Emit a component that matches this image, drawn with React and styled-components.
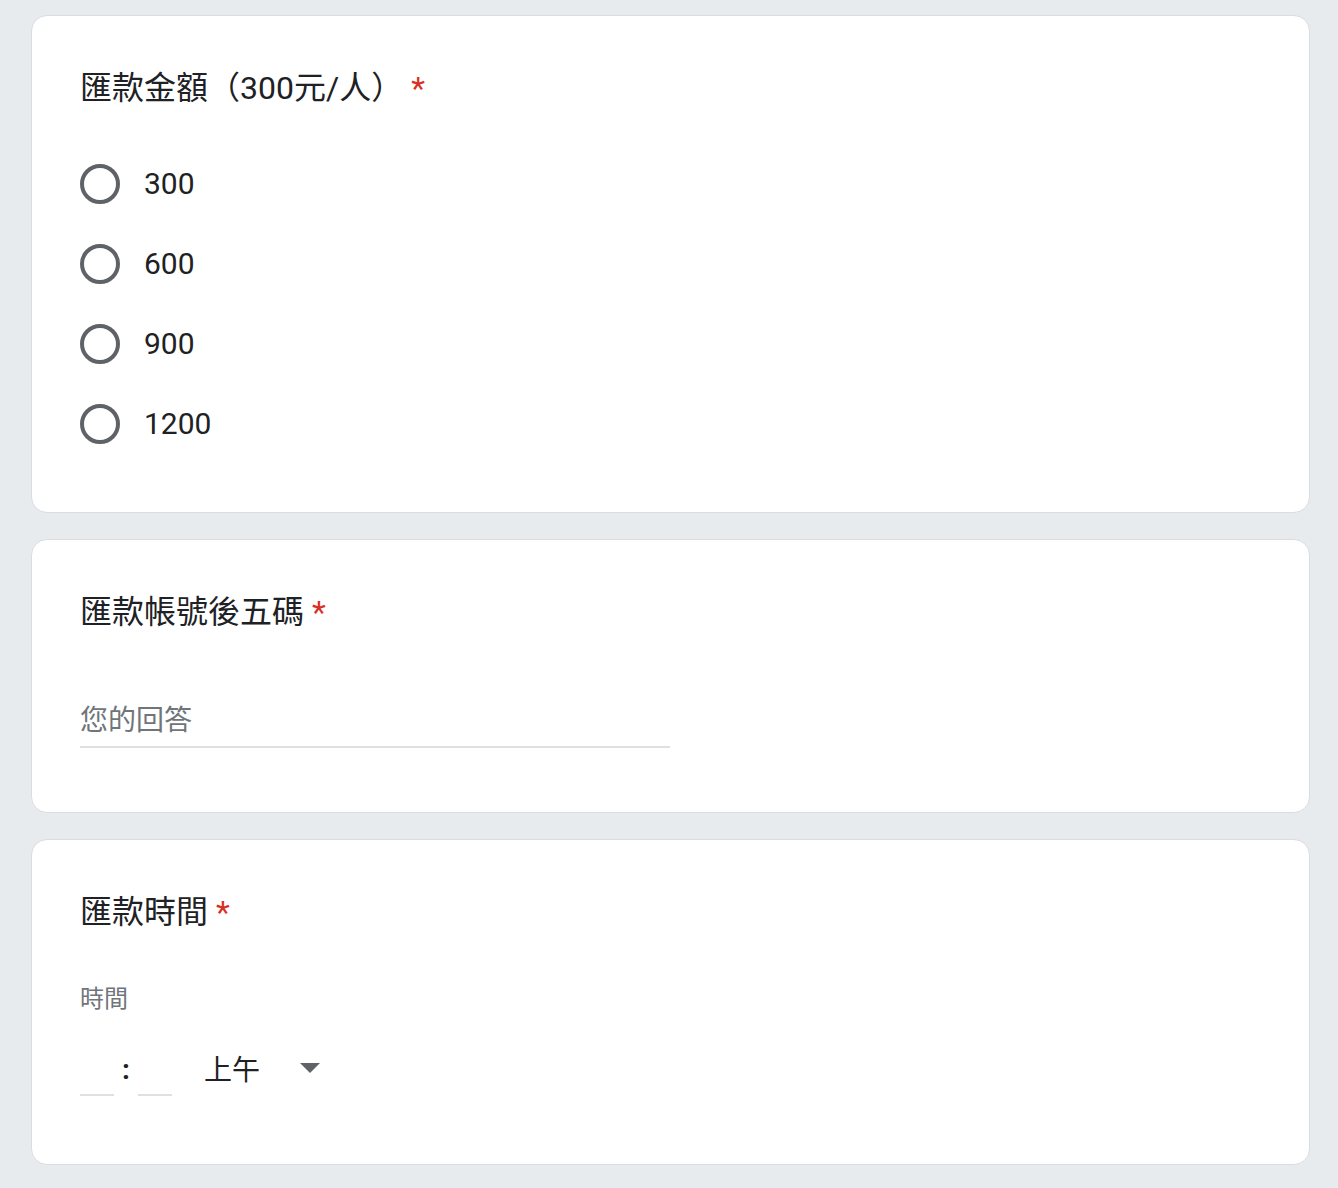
import styled, { createGlobalStyle } from "styled-components";

const GlobalStyle = createGlobalStyle`
  html, body {
    margin: 0;
    padding: 0;
    background-color: #e8ebee;
  }

  body {
    font-family: Roboto, "Noto Sans CJK TC", sans-serif;
    color: #202124;
  }
`;

const Page = styled.div`
  display: flex;
  flex-direction: column;
  gap: 26px;
  padding: 15px 28px 23px 31px;
  background-color: #e8ebee;
  min-height: 100vh;
  box-sizing: border-box;
`;

const Card = styled.div`
  width: 1279px;
  box-sizing: border-box;
  background-color: #fff;
  border: 1px solid #dadce0;
  border-radius: 16px;
  padding: 48px 48px ${(p) => p.$bottom || 48}px;
`;

const Title = styled.div`
  font-size: 32px;
  line-height: 48px;
  color: #202124;
  font-weight: 400;
`;

const Required = styled.span`
  color: #d93025;
  padding-left: 8px;
`;

const RadioList = styled.div`
  display: flex;
  flex-direction: column;
  margin-top: 32px;
`;

const RadioRow = styled.label`
  display: flex;
  align-items: center;
  gap: 24px;
  height: 80px;
  cursor: pointer;
`;

const RadioCircle = styled.span`
  width: 40px;
  height: 40px;
  box-sizing: border-box;
  border: 4px solid #5f6368;
  border-radius: 50%;
  flex-shrink: 0;
`;

const RadioText = styled.span`
  font-size: 30px;
  line-height: 40px;
  color: #202124;
`;

const AnswerInput = styled.input`
  display: block;
  width: 590px;
  margin: 64px 0 16px;
  padding: 0 0 6px;
  height: 48px;
  box-sizing: border-box;
  border: none;
  border-bottom: 2px solid #e0e0e0;
  outline: none;
  font-family: Roboto, "Noto Sans CJK TC", sans-serif;
  font-size: 28px;
  line-height: 40px;
  color: #202124;
  background: transparent;

  &::placeholder {
    color: #70757a;
  }
`;

const SubLabel = styled.div`
  margin-top: 47px;
  font-size: 24px;
  line-height: 32px;
  color: #70757a;
`;

const TimeRow = styled.div`
  display: flex;
  align-items: center;
  height: 56px;
  margin: 25px 0 20px;
`;

const TimeInput = styled.input`
  width: 34px;
  height: 56px;
  box-sizing: border-box;
  padding: 0;
  border: none;
  border-bottom: 2px solid #e0e0e0;
  outline: none;
  font-family: Roboto, sans-serif;
  font-size: 28px;
  text-align: center;
  background: transparent;
`;

const Colon = styled.span`
  width: 24px;
  text-align: center;
  font-size: 28px;
  font-weight: 700;
  line-height: 56px;
  padding-top: 4px;
  color: #202124;
`;

const Select = styled.div`
  display: flex;
  align-items: center;
  gap: 40px;
  margin-left: 32px;
  height: 56px;
  font-size: 28px;
  color: #202124;
  cursor: pointer;
`;

const options = ["300", "600", "900", "1200"];

function Arrow() {
  return (
    <svg width="20" height="10" viewBox="0 0 20 10">
      <path d="M0 0 L20 0 L10 10 Z" fill="#5f6368" />
    </svg>
  );
}

export default function App() {
  return (
    <>
      <GlobalStyle />
      <Page>
        <Card>
          <Title>
            匯款金額（300元/人）<Required>*</Required>
          </Title>
          <RadioList>
            {options.map((o) => (
              <RadioRow key={o}>
                <RadioCircle />
                <RadioText>{o}</RadioText>
              </RadioRow>
            ))}
          </RadioList>
        </Card>

        <Card>
          <Title>
            匯款帳號後五碼<Required>*</Required>
          </Title>
          <AnswerInput type="text" placeholder="您的回答" />
        </Card>

        <Card>
          <Title>
            匯款時間<Required>*</Required>
          </Title>
          <SubLabel>時間</SubLabel>
          <TimeRow>
            <TimeInput type="text" />
            <Colon>:</Colon>
            <TimeInput type="text" />
            <Select>
              <span>上午</span>
              <Arrow />
            </Select>
          </TimeRow>
        </Card>
      </Page>
    </>
  );
}
